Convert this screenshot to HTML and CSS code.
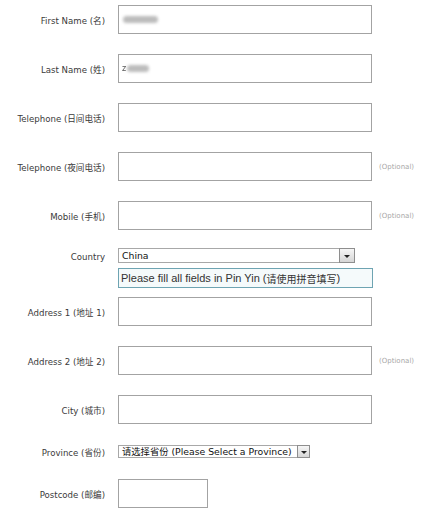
FILE: index.html
```html
<!DOCTYPE html>
<html>
<head>
<meta charset="utf-8">
<link rel="stylesheet" href="styles.css">
</head>
<body>
<div class="form">
  <div class="row">
    <div class="label">First Name (名)</div>
    <div class="input"><span class="smudge s-first"></span></div>
  </div>
  <div class="row">
    <div class="label">Last Name (姓)</div>
    <div class="input"><span class="zchar">z</span><span class="smudge s-last"></span></div>
  </div>
  <div class="row">
    <div class="label">Telephone (日间电话)</div>
    <div class="input"></div>
  </div>
  <div class="row">
    <div class="label">Telephone (夜间电话)</div>
    <div class="input"></div>
    <div class="opt">(Optional)</div>
  </div>
  <div class="row row-before-select">
    <div class="label">Mobile (手机)</div>
    <div class="input"></div>
    <div class="opt">(Optional)</div>
  </div>
  <div class="row row-select">
    <div class="label label-low">Country</div>
    <div class="select country">
      <span class="sel-text">China</span>
      <span class="arrow"><span class="tri"></span></span>
    </div>
  </div>
  <div class="note">Please fill all fields in Pin Yin (<span class="cjk">请使用拼音填写</span>)</div>
  <div class="row">
    <div class="label">Address 1 (地址 1)</div>
    <div class="input"></div>
  </div>
  <div class="row">
    <div class="label">Address 2 (地址 2)</div>
    <div class="input"></div>
    <div class="opt">(Optional)</div>
  </div>
  <div class="row row-before-prov">
    <div class="label">City (城市)</div>
    <div class="input"></div>
  </div>
  <div class="row row-prov">
    <div class="label">Province (省份)</div>
    <div class="select province">
      <span class="sel-text">请选择省份 (Please Select a Province)</span>
      <span class="arrow"><span class="tri"></span></span>
    </div>
  </div>
  <div class="row">
    <div class="label">Postcode (邮编)</div>
    <div class="input short"></div>
  </div>
</div>
</body>
</html>
```
FILE: styles.css
```css
html, body {
  margin: 0;
  padding: 0;
  background: #ffffff;
}
.form {
  padding-top: 5px;
  font-family: "DejaVu Sans", "Noto Sans CJK SC", sans-serif;
}
.row {
  display: flex;
  align-items: center;
  margin-bottom: 20px;
}
.row-before-select {
  margin-bottom: 18px;
}
.row-select {
  margin-bottom: 5px;
}
.row-before-prov {
  margin-bottom: 21px;
}
.row-prov {
  margin-bottom: 21px;
}
.label {
  flex: 0 0 118px;
  box-sizing: border-box;
  padding-right: 13px;
  text-align: right;
  font-size: 8.6px;
  color: #3a3a3a;
  white-space: nowrap;
}
.label-low {
  padding-top: 3px;
}
.input {
  width: 254px;
  height: 29px;
  box-sizing: border-box;
  border: 1px solid #a3a3a3;
  background: #fff;
  display: flex;
  align-items: center;
}
.input.short {
  width: 90px;
}
.opt {
  margin-left: 7px;
  font-size: 7px;
  color: #a8a8a8;
  white-space: nowrap;
}
.smudge {
  display: inline-block;
  height: 7px;
  border-radius: 4px;
  background: #bcbcbc;
  filter: blur(1.5px);
}
.s-first {
  margin-left: 4px;
  width: 35px;
}
.s-last {
  margin-left: 1px;
  width: 22px;
}
.zchar {
  margin-left: 3px;
  font-size: 8px;
  color: #555;
  filter: blur(0.4px);
}
.select {
  display: flex;
  align-items: center;
  box-sizing: border-box;
  border: 1px solid #a8a8a8;
  background: #fff;
  font-size: 9.3px;
  color: #111;
  white-space: nowrap;
}
.select.country {
  width: 237px;
  height: 15px;
}
.select.province {
  width: 192px;
  height: 13px;
}
.sel-text {
  padding-left: 3px;
  line-height: 11px;
}
.arrow {
  align-self: stretch;
  width: 16px;
  margin: -1px -1px -1px auto;
  box-sizing: border-box;
  border: 1px solid #8e8e8e;
  background: linear-gradient(#f6f6f6, #d6d6d6);
  display: flex;
  align-items: center;
  justify-content: center;
}
.province .arrow {
  width: 13px;
}
.tri {
  width: 0;
  height: 0;
  margin-top: 2px;
  border-left: 3px solid transparent;
  border-right: 3px solid transparent;
  border-top: 3px solid #222;
}
.note {
  margin-left: 118px;
  margin-bottom: 9px;
  width: 255px;
  height: 20px;
  box-sizing: border-box;
  border: 1px solid #6ea4b2;
  background: #f5fafb;
  padding-left: 2px;
  display: flex;
  align-items: center;
  font-family: "Liberation Sans", "Noto Sans CJK SC", sans-serif;
  font-size: 11px;
  color: #333;
  white-space: nowrap;
}
.cjk {
  font-size: 10px;
}
```
